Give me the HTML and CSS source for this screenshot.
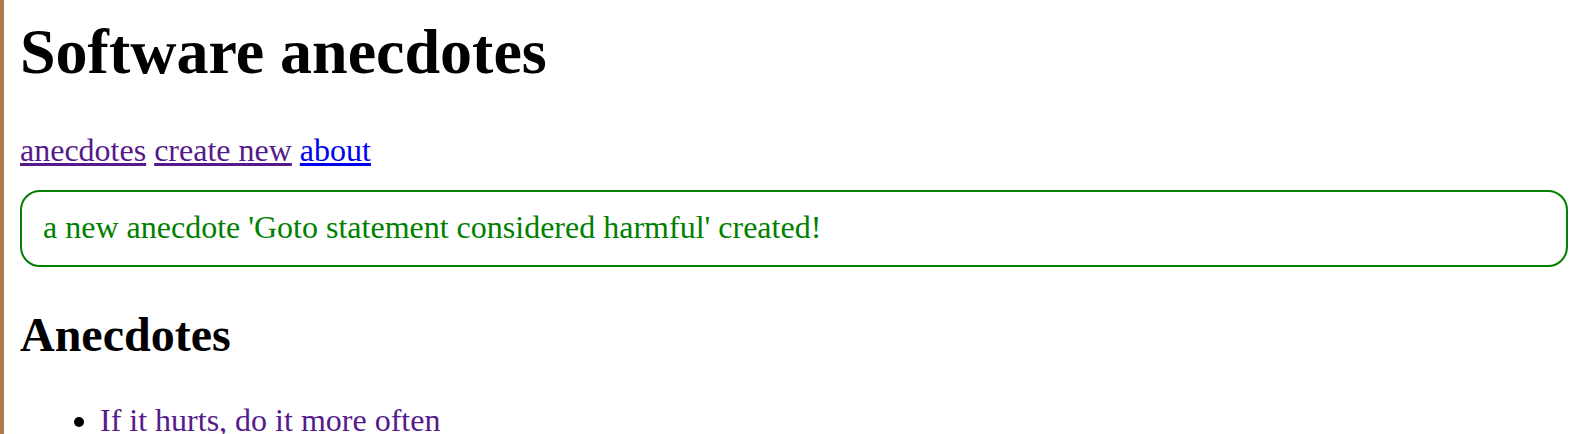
FILE: index.html
```html
<!DOCTYPE html>
<html lang="en">
<head>
<meta charset="utf-8">
<title>Software anecdotes</title>
<link rel="stylesheet" href="styles.css">
</head>
<body>
<div class="app">
  <h1 class="title">Software anecdotes</h1>
  <div class="menu">
    <a class="visited" href="#anecdotes">anecdotes</a>
    <a class="visited" href="#create">create new</a>
    <a class="fresh" href="#about">about</a>
  </div>
  <div class="notification">a new anecdote 'Goto statement considered harmful' created!</div>
  <h2 class="subtitle">Anecdotes</h2>
  <ul class="list">
    <li><a class="visited plain" href="#a1">If it hurts, do it more often</a></li>
  </ul>
</div>
</body>
</html>
```
FILE: styles.css
```css
html {
  background: #fff;
  border-left: 4px solid #b07a4c;
  min-height: 100%;
}
body {
  margin: 0 6px 0 16px;
  font-family: "Liberation Serif", "Times New Roman", serif;
  font-size: 32px;
  color: #000;
}
.title {
  font-size: 64px;
  font-weight: bold;
  margin: 15px 0 43px;
}
.menu a {
  color: #551a8b;
}
.menu a.fresh {
  color: #0000ee;
}
.notification {
  margin-top: 21px;
  color: #008000;
  border: 2px solid #008000;
  border-radius: 20px;
  padding: 17px 20px 19px 21px;
}
.subtitle {
  font-size: 48px;
  font-weight: bold;
  margin: 40px 0;
}
.list {
  margin: 0;
  padding-left: 80px;
}
.list a.plain {
  color: #551a8b;
  text-decoration: none;
}
```
